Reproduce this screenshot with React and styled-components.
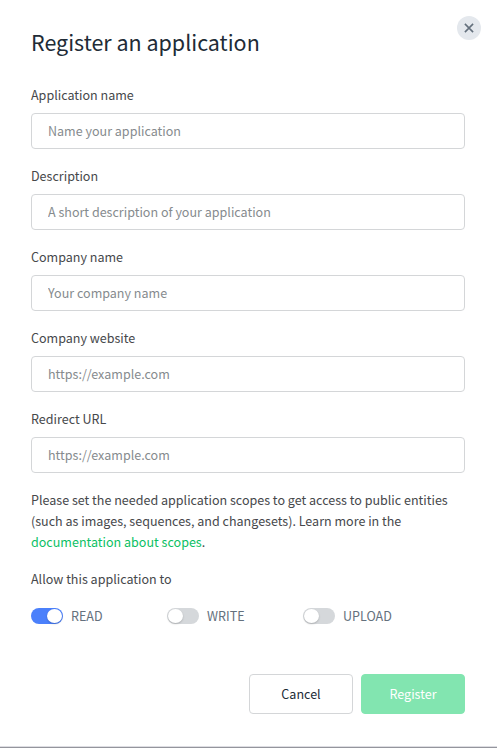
import React, { useState } from "react";
import styled, { createGlobalStyle } from "styled-components";

const GlobalStyle = createGlobalStyle`
  *, *::before, *::after { box-sizing: border-box; }
  body {
    margin: 0;
    background: #fff;
    color: #46484b;
    font-family: "Noto Sans CJK SC", "Noto Sans", sans-serif;
    font-size: 12.54px;
    line-height: 21px;
  }
`;

const Dialog = styled.form`
  position: relative;
  height: 748px;
  padding: 24px 32px 0 31px;
  background: #fff;
  border-bottom: 1px solid #94959d;
  box-shadow: inset 0 -1px 0 #dddde2;
`;

const Title = styled.h1`
  margin: 0 0 24px;
  font-size: 21.47px;
  font-weight: 400;
  line-height: 36px;
  color: #212b36;
`;

const CloseButton = styled.button`
  position: absolute;
  top: 16px;
  right: 16px;
  display: flex;
  align-items: center;
  justify-content: center;
  width: 24px;
  height: 24px;
  padding: 0;
  border: 0;
  border-radius: 50%;
  background: #e4e8ed;
  color: #64707d;
`;

const Fields = styled.div`
  display: flex;
  flex-direction: column;
  gap: 16px;
`;

const Field = styled.label`
  display: flex;
  flex-direction: column;
  gap: 8px;
`;

const Input = styled.input`
  width: 100%;
  height: 36px;
  padding: 0 16px 1px;
  border: 1px solid #d4d6d8;
  border-radius: 4px;
  background: #fff;
  font: inherit;
  color: #46484b;
  outline: none;

  &::placeholder {
    color: #868b8e;
    opacity: 1;
  }
`;

const Note = styled.p`
  margin: 16px 0;
`;

const DocLink = styled.a`
  color: #0cbf64;
  text-decoration: none;
`;

const Scopes = styled.div`
  display: grid;
  grid-template-columns: repeat(3, 136px);
  margin-top: 16px;
`;

const Scope = styled.label`
  display: flex;
  align-items: center;
  gap: 8px;
  color: #64707d;
`;

const Track = styled.button`
  display: flex;
  align-items: center;
  justify-content: ${(p) => (p.$on ? "flex-end" : "flex-start")};
  width: 32px;
  height: 16px;
  padding: 0 1px;
  border: 0;
  border-radius: 8px;
  background: ${(p) => (p.$on ? "#4b80fb" : "#d5d8db")};
`;

const Knob = styled.span`
  width: 15px;
  height: 14px;
  border-radius: 50%;
  background: #fff;
  box-shadow: 0 1px 2px rgba(0, 0, 0, 0.2);
`;

const Actions = styled.div`
  display: flex;
  justify-content: flex-end;
  gap: 8px;
  margin-top: 48px;
`;

const Button = styled.button`
  width: 104px;
  height: 40px;
  padding: 0 0 1px;
  border: 1px solid ${(p) => (p.$primary ? "#82e5b0" : "#d4d6d8")};
  border-radius: 4px;
  background: ${(p) => (p.$primary ? "#82e5b0" : "#fff")};
  color: ${(p) => (p.$primary ? "#fff" : "#212b36")};
  font: inherit;
`;

const fields = [
  ["Application name", "Name your application"],
  ["Description", "A short description of your application"],
  ["Company name", "Your company name"],
  ["Company website", "https://example.com"],
  ["Redirect URL", "https://example.com"],
];

export default function App() {
  const [scopes, setScopes] = useState({ READ: true, WRITE: false, UPLOAD: false });
  const toggle = (name) => setScopes((s) => ({ ...s, [name]: !s[name] }));

  return (
    <>
      <GlobalStyle />
      <Dialog onSubmit={(e) => e.preventDefault()}>
        <Title>Register an application</Title>
        <CloseButton type="button" aria-label="Close">
          <svg width="10" height="10" viewBox="0 0 10 10" fill="none" stroke="currentColor" strokeWidth="1.6">
            <path d="M.9.9 9.1 9.1M9.1.9.9 9.1" />
          </svg>
        </CloseButton>
        <Fields>
          {fields.map(([label, placeholder]) => (
            <Field key={label}>
              {label}
              <Input placeholder={placeholder} />
            </Field>
          ))}
        </Fields>
        <Note>
          Please set the needed application scopes to get access to public entities
          (such as images, sequences, and changesets). Learn more in the
          <br />
          <DocLink href="#">documentation about scopes</DocLink>.
        </Note>
        <div>Allow this application to</div>
        <Scopes>
          {Object.entries(scopes).map(([name, on]) => (
            <Scope key={name}>
              <Track type="button" role="switch" aria-checked={on} aria-label={name} $on={on} onClick={() => toggle(name)}>
                <Knob />
              </Track>
              {name}
            </Scope>
          ))}
        </Scopes>
        <Actions>
          <Button type="button">Cancel</Button>
          <Button type="submit" $primary>Register</Button>
        </Actions>
      </Dialog>
    </>
  );
}
